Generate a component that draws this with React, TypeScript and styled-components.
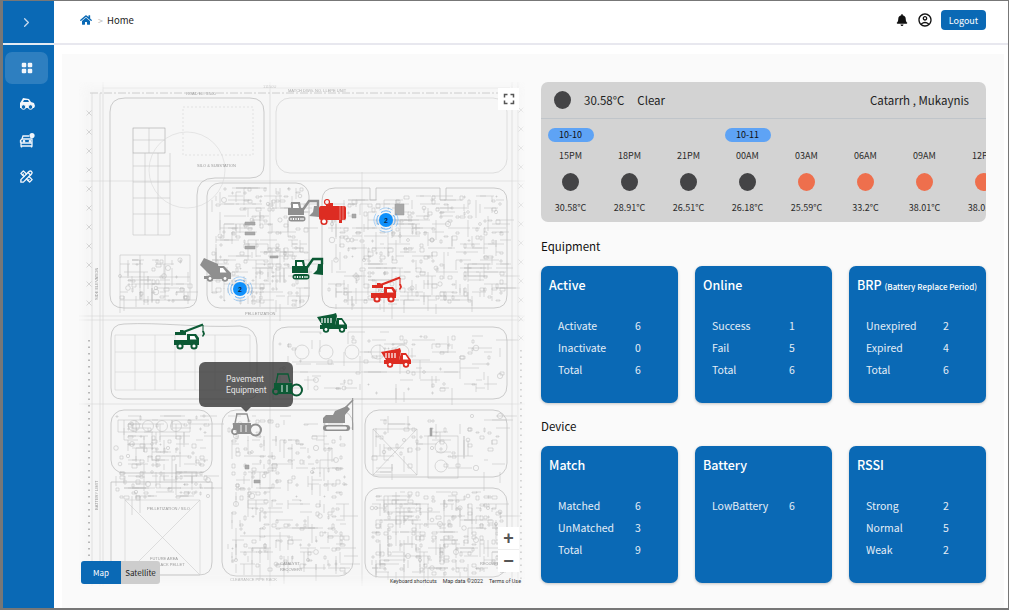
import { Fragment, useMemo } from "react";
import styled, { createGlobalStyle } from "styled-components";
import { ChevronRight } from "lucide-react";
import { BsGridFill } from "react-icons/bs";
import { FaBell, FaHome } from "react-icons/fa";
import { MdFullscreen, MdOutlineAccountCircle } from "react-icons/md";
import { TbTools } from "react-icons/tb";

const BLUE = "#0a69b5";
const RED = "#dd2c22";
const GREEN = "#0c5a35";
const GREY = "#8f8f8f";

const GlobalStyle = createGlobalStyle`
  html, body {
    margin: 0;
    padding: 0;
    background: #fff;
    font-family: "Noto Sans CJK KR", "Noto Sans", sans-serif;
  }
  * { box-sizing: border-box; }
`;

const Frame = styled.div`
  width: 1009px;
  height: 610px;
  display: flex;
  overflow: hidden;
  border-style: solid;
  border-color: #777;
  border-width: 1px 1px 2px 3px;
`;

const Sidebar = styled.aside`
  width: 51px;
  flex: none;
  background: ${BLUE};
  display: flex;
  flex-direction: column;
`;

const SidebarTop = styled.div`
  height: 44px;
  flex: none;
  display: flex;
  align-items: center;
  justify-content: center;
  padding-right: 5px;
  color: #c9dbee;
  border-bottom: 2px solid #e4ebf3;
`;

const Nav = styled.nav`
  display: flex;
  flex-direction: column;
  gap: 4px;
  padding: 7px 2px 0;
`;

const NavItem = styled.div<{ $active?: boolean }>`
  width: 43px;
  height: 32px;
  border-radius: 7px;
  display: flex;
  align-items: center;
  justify-content: center;
  color: #f2f6fb;
  background: ${(p) => (p.$active ? "rgba(255,255,255,0.15)" : "transparent")};
`;

const Main = styled.main`
  flex: 1;
  min-width: 0;
  display: flex;
  flex-direction: column;
`;

const Header = styled.header`
  height: 44px;
  flex: none;
  display: flex;
  align-items: center;
  padding: 0 22px 4px 26px;
  border-bottom: 2px solid #e8e8ef;
`;

const Crumbs = styled.div`
  display: flex;
  align-items: center;
  color: #222;
  font-size: 9.5px;
  flex: 1;
`;

const CrumbSep = styled.span`
  color: #b9b9b9;
  margin: 0 4px 0 6px;
  font-size: 9px;
`;

const HeaderIcon = styled.span`
  display: flex;
  align-items: center;
  justify-content: center;
  width: 16px;
  color: #111;
  margin-right: 7px;
`;

const LogoutButton = styled.button`
  width: 45px;
  height: 20px;
  margin-left: 1px;
  padding: 0;
  border: 0;
  border-radius: 4px;
  background: ${BLUE};
  color: #fff;
  font-family: inherit;
  font-size: 9px;
`;

const Content = styled.div`
  flex: 1;
  padding: 9px 4px 0 8px;
  display: flex;
  min-height: 0;
`;

const Panel = styled.div`
  flex: 1;
  background: #fafafa;
  padding: 28px 17px 0;
  display: flex;
  gap: 16px;
`;

const MapBox = styled.div`
  position: relative;
  width: 446px;
  height: 504px;
  flex: none;
  background: #f6f6f6;
  overflow: hidden;
  &::after {
    content: "";
    position: absolute;
    inset: 0;
    box-shadow: inset 0 0 10px 5px rgba(250, 250, 250, 0.9);
    pointer-events: none;
  }
`;

const BlueprintSvg = styled.svg`
  display: block;
  width: 446px;
  height: 504px;
  fill: none;
  stroke: #b8b8b8;
  stroke-width: 0.5;
  filter: blur(0.3px);
  text {
    fill: #9c9c9c;
    stroke: none;
    font-family: "Liberation Sans", sans-serif;
    font-size: 4px;
  }
`;

// map coordinates below are measured from the page, hence the minus on left/top
const Pin = styled.svg<{ $left: number; $top: number; $color: string; $z?: number }>`
  position: absolute;
  left: ${(p) => p.$left - 79}px;
  top: ${(p) => p.$top - 82}px;
  color: ${(p) => p.$color};
  z-index: ${(p) => p.$z ?? 2};
  overflow: visible;
`;

const Cluster = styled.div<{ $left: number; $top: number }>`
  position: absolute;
  left: ${(p) => p.$left - 79 - 13}px;
  top: ${(p) => p.$top - 82 - 13}px;
  width: 26px;
  height: 26px;
  display: flex;
  align-items: center;
  justify-content: center;
  color: #102a4a;
  font-size: 7px;
  font-weight: 700;
  font-family: "Liberation Sans", sans-serif;
  z-index: 2;
  svg {
    position: absolute;
    inset: 0;
  }
  span {
    position: relative;
  }
`;

const Tooltip = styled.div`
  position: absolute;
  left: 120px;
  top: 280px;
  width: 94px;
  height: 45px;
  border-radius: 6px;
  background: rgba(62, 62, 62, 0.84);
  color: #e6e6e6;
  font-family: Roboto, sans-serif;
  font-size: 8.5px;
  line-height: 11px;
  padding: 12px 0 0 27px;
  z-index: 1;
  &::after {
    content: "";
    position: absolute;
    left: 42px;
    bottom: -5px;
    border-style: solid;
    border-width: 5px 5px 0;
    border-color: rgba(62, 62, 62, 0.84) transparent transparent;
  }
`;

const FullscreenButton = styled.div`
  position: absolute;
  left: 419px;
  top: 6px;
  width: 21px;
  height: 22px;
  background: #fff;
  color: #555;
  display: flex;
  align-items: center;
  justify-content: center;
  z-index: 3;
`;

const ZoomBox = styled.div`
  position: absolute;
  left: 419px;
  top: 445px;
  width: 21px;
  height: 45px;
  background: #fff;
  z-index: 3;
  display: flex;
  flex-direction: column;
`;

const ZoomKey = styled.div`
  flex: 1;
  display: flex;
  align-items: center;
  justify-content: center;
  color: #555;
  font-size: 18px;
  font-weight: 700;
  line-height: 1;
  font-family: "Liberation Sans", sans-serif;
  & + & {
    border-top: 1px solid #eee;
  }
`;

const MapType = styled.div`
  position: absolute;
  left: 2px;
  top: 479px;
  display: flex;
  height: 23px;
  border-radius: 3px;
  overflow: hidden;
  z-index: 3;
`;

const MapTypeKey = styled.div<{ $on?: boolean }>`
  width: ${(p) => (p.$on ? 40 : 39)}px;
  display: flex;
  align-items: center;
  justify-content: center;
  font-size: 8px;
  background: ${(p) => (p.$on ? BLUE : "#cdcdcd")};
  color: ${(p) => (p.$on ? "#fff" : "#222")};
`;

const Attribution = styled.div`
  position: absolute;
  right: 4px;
  bottom: 1px;
  display: flex;
  gap: 6px;
  font-size: 5.4px;
  line-height: 7px;
  color: #333;
  font-family: Roboto, sans-serif;
  z-index: 3;
`;

const RightCol = styled.div`
  width: 445px;
  flex: none;
`;

const Weather = styled.section`
  height: 140px;
  border-radius: 7px;
  background: #d3d3d3;
  overflow: hidden;
`;

const WeatherHead = styled.div`
  height: 37px;
  display: flex;
  align-items: center;
  padding: 0 17px 0 13px;
  border-bottom: 1px solid #c0c5ca;
  color: #222;
  font-size: 11.5px;
`;

const Dot = styled.span<{ $warm?: boolean }>`
  display: block;
  width: 17px;
  height: 18px;
  border-radius: 50%;
  flex: none;
  background: ${(p) => (p.$warm ? "#ee6f4d" : "#444446")};
`;

const HeadTemp = styled.span`
  margin-left: 13px;
`;

const HeadSky = styled.span`
  margin-left: 13px;
  flex: 1;
`;

const Forecast = styled.div`
  display: flex;
`;

const Slot = styled.div`
  width: 59px;
  flex: none;
  display: flex;
  flex-direction: column;
  align-items: center;
  padding-top: 9px;
  color: #2a2a2a;
  font-size: 9px;
  white-space: nowrap;
`;

const DatePill = styled.div`
  width: 46px;
  height: 14px;
  border-radius: 7px;
  background: #5ea3f5;
  color: #111;
  font-size: 9px;
  line-height: 14px;
  text-align: center;
`;

const PillGap = styled.div`
  height: 14px;
`;

const SlotText = styled.div`
  height: 16px;
  line-height: 16px;
  margin-top: 6px;
`;

const SlotDot = styled(Dot)`
  margin: 9px 0 3px;
`;

const SectionTitle = styled.h3`
  margin: 14px 0 8px;
  height: 22px;
  line-height: 21px;
  font-size: 11.5px;
  font-weight: 400;
  color: #111;
  & ~ & {
    margin-top: 13px;
  }
`;

const CardRow = styled.div`
  display: grid;
  grid-template-columns: repeat(3, 137px);
  gap: 17px;
`;

const Card = styled.div`
  height: 137px;
  border-radius: 7px;
  background: ${BLUE};
  box-shadow: 0 1px 3px rgba(0, 0, 0, 0.22);
  color: #fff;
  padding: 9px 8px 0;
`;

const CardTitle = styled.h4`
  margin: 0;
  height: 20px;
  line-height: 20px;
  font-size: 12.5px;
  font-weight: 500;
  white-space: nowrap;
  small {
    font-size: 8px;
    font-weight: 500;
  }
`;

const Stats = styled.dl`
  margin: 20px 0 0 9px;
  display: grid;
  grid-template-columns: 77px 1fr;
  grid-auto-rows: 22px;
  line-height: 22px;
  font-size: 10.5px;
  color: #e4edf6;
  dt,
  dd {
    margin: 0;
  }
`;

type Vehicle = { left: number; top: number; color: string; z?: number };

const Wheel = ({ cx, cy, r = 3.2 }: { cx: number; cy: number; r?: number }) => (
  <>
    <circle cx={cx} cy={cy} r={r} fill="currentColor" />
    <circle cx={cx} cy={cy} r={r * 0.45} fill="#fff" />
  </>
);

const DumpTruck = ({ left, top, color }: Vehicle) => (
  <Pin $left={left} $top={top} $color={color} width="32" height="20" viewBox="0 0 32 20">
    <path d="M0 4 16 1l3-1 1 3-2 9H5z" fill="currentColor" />
    <path d="M5 5v5M8 5v5M11 5v5M14 5v5" stroke="#fff" strokeWidth="1.2" />
    <path d="M20 5h5l5 7v4H3v-4h15z" fill="currentColor" />
    <path d="M22 7h2.5l3 4.5H22z" fill="#fff" />
    <Wheel cx={9} cy={16.5} />
    <Wheel cx={25} cy={16.5} />
  </Pin>
);

const Crane = ({ left, top, color }: Vehicle) => (
  <Pin $left={left} $top={top} $color={color} width="31" height="27" viewBox="0 0 31 27">
    <path d="M7 10 29 1.5" stroke="currentColor" strokeWidth="2.2" />
    <path d="M29 2v6" stroke="currentColor" strokeWidth="1" />
    <path d="M28 8h2l1 3-2 3-1-1 1-2z" fill="currentColor" />
    <path d="M1 9h5V7h3l3 2v3H1z" fill="currentColor" />
    <path d="M13 11h9l3 4v7H0v-5h13z" fill="currentColor" />
    <path d="M16 13h4.500l2 3.500H16z" fill="#fff" />
    <Wheel cx={6} cy={23} r={3.6} />
    <Wheel cx={20} cy={23} r={3.6} />
  </Pin>
);

const Excavator = ({ left, top, color }: Vehicle) => (
  <Pin $left={left} $top={top} $color={color} width="34" height="22" viewBox="0 0 34 22">
    <path d="M0 8h3V2h9l1 6h3v7H0z" fill="currentColor" />
    <path d="M5 4h5l1 4H5z" fill="#fff" />
    <path d="M14 11 21 1h9v5" fill="none" stroke="currentColor" strokeWidth="2.4" />
    <path d="M26 6h5v11l-10-1 4-4z" fill="currentColor" />
    <rect x="0.500" y="16" width="17" height="5.500" rx="2.700" fill="currentColor" />
    <path d="M3 18v2M5.500 18v2M8 18v2M10.500 18v2M13 18v2M15 18v2" stroke="#fff" strokeWidth="1.200" />
  </Pin>
);

const Mixer = ({ left, top, color }: Vehicle) => (
  <Pin $left={left} $top={top} $color={color} width="32" height="24" viewBox="0 0 32 24">
    <path d="M0 7 4 0 18 6l1 7-5 5h-3z" fill="currentColor" />
    <path d="M18 8h6l7 7v6H4v-3h9z" fill="currentColor" />
    <path d="M20 10h3l3.500 4.500H20z" fill="#fff" />
    <Wheel cx={10} cy={20.500} />
    <Wheel cx={25} cy={20.500} />
  </Pin>
);

const Compressor = ({ left, top, color }: Vehicle) => (
  <Pin $left={left} $top={top} $color={color} $z={3} width="28" height="26" viewBox="0 0 28 26">
    <rect x="0" y="7" width="27" height="14" rx="2" fill="currentColor" />
    <rect x="7" y="4" width="7" height="4" fill="currentColor" />
    <path d="M21 7v14M24 7v14" stroke="#f1a49e" strokeWidth="0.700" />
    <circle cx="8" cy="3" r="2.500" fill="#f4f4f4" stroke="currentColor" strokeWidth="1.200" />
    <circle cx="5" cy="22.500" r="2.800" fill="#fff" stroke="currentColor" strokeWidth="1.600" />
    <path d="M20 21h3v3h-3z" fill="currentColor" />
  </Pin>
);

const Roller = ({ left, top, color, z }: Vehicle) => (
  <Pin $left={left} $top={top} $color={color} $z={z} width="31" height="24" viewBox="0 0 31 24">
    <path d="M5 1h11l2 8M6 1 4 10" fill="none" stroke="currentColor" strokeWidth="1.300" />
    <path d="M2 10h18v11H7v-4H2z" fill="currentColor" />
    <path d="M10 12v7M15 12v7" stroke="#fff" strokeWidth="1.100" opacity="0.800" />
    <circle cx="3.800" cy="18.500" r="2.800" fill="none" stroke="currentColor" strokeWidth="1.800" />
    <circle cx="24.500" cy="17" r="5.500" fill="none" stroke="currentColor" strokeWidth="2" />
  </Pin>
);

const CrawlerCrane = ({ left, top, color }: Vehicle) => (
  <Pin $left={left} $top={top} $color={color} width="33" height="33" viewBox="0 0 33 33">
    <path d="M29.700 0v32" stroke="currentColor" strokeWidth="1" />
    <path d="M22 10 30 2" stroke="currentColor" strokeWidth="1.600" />
    <path d="M0 25v-5l3-3h7l2-4 12-5 3 3-5 6v8z" fill="currentColor" />
    <rect x="0" y="27" width="27" height="6" rx="3" fill="currentColor" />
    <rect x="3" y="28.500" width="21" height="3" rx="1.500" fill="#f2f2f2" />
  </Pin>
);

const ClusterMark = ({ left, top }: { left: number; top: number }) => (
  <Cluster $left={left} $top={top}>
    <svg width="26" height="26" viewBox="0 0 26 26" fill="none" stroke="#2f95f5">
      <circle cx="13" cy="13" r="7" fill="#0f90fb" stroke="none" />
      <g strokeWidth="1" opacity="0.750">
        <path d="M8 5.500a9 9 0 0 1 10 0M5.500 8a9 9 0 0 0 0 10M20.500 8a9 9 0 0 1 0 10M8 20.500a9 9 0 0 0 10 0" />
        <path d="M6.500 3a12 12 0 0 1 13 0M3 6.500a12 12 0 0 0 0 13M23 6.500a12 12 0 0 1 0 13M6.500 23a12 12 0 0 0 13 0" opacity="0.500" />
      </g>
    </svg>
    <span>2</span>
  </Cluster>
);

// zones of plant detail, in page coordinates: x, y, w, h, how many marks
const DETAIL_ZONES: [number, number, number, number, number][] = [
  [212, 186, 92, 118, 300],
  [328, 195, 174, 108, 460],
  [278, 332, 224, 60, 130],
  [228, 416, 118, 155, 360],
  [116, 414, 92, 52, 130],
  [116, 470, 92, 28, 90],
  [370, 492, 132, 80, 360],
  [372, 414, 130, 60, 90],
  [118, 258, 72, 44, 90],
];

const buildDetail = () => {
  let seed = 48271;
  const rnd = (n: number) => {
    seed = (seed * 16807) % 2147483647;
    return (seed / 2147483647) * n;
  };
  let d = "";
  for (const [x, y, w, h, count] of DETAIL_ZONES) {
    for (let i = 0; i < count; i++) {
      const px = Math.round((x + rnd(w)) / 4) * 4;
      const py = Math.round((y + rnd(h)) / 4) * 4;
      const kind = rnd(10);
      if (kind < 4) {
        const bw = 1 + Math.round(rnd(4));
        d += `M${px} ${py}h${bw}v${1 + Math.round(rnd(3))}h-${bw}z`;
      } else if (kind < 4.600) {
        const r = 1 + rnd(1.800);
        d += `M${px - r} ${py}a${r} ${r} 0 1 0 ${2 * r} 0a${r} ${r} 0 1 0 ${-2 * r} 0`;
      } else if (kind < 7.500) {
        d += `M${px} ${py}h${4 + Math.round(rnd(20))}`;
      } else {
        d += `M${px} ${py}v${4 + Math.round(rnd(16))}`;
      }
    }
  }
  return d;
};

const crossMarks = (x: number, from: number, to: number, step: number) => {
  let d = "";
  for (let y = from; y <= to; y += step) d += `M${x - 2.500} ${y - 2.500}l5 5m0-5l-5 5`;
  return d;
};

const Blueprint = () => {
  const detail = useMemo(buildDetail, []);
  return (
    <BlueprintSvg viewBox="79 82 446 504">
      {/* roads and site limits */}
      <path d="M90 93H510" strokeDasharray="8 2 2 2" stroke="#999" />
      <path d="M92 93V586M100 93V586M103 82V586M270 82V586M362 172V586M512 82V586M518 82V586" stroke="#c9c9c9" />
      <path d="M79 316H525M79 320H525M79 404H525M79 181H525M103 88H510" stroke="#cfcfcf" />
      <path d={crossMarks(89, 113, 320, 19)} stroke="#aaa" />
      <path d={crossMarks(521, 110, 350, 19)} stroke="#aaa" />
      <path d="M89 340V580M521 350V580" strokeDasharray="1.500 5" stroke="#999" strokeWidth="1.500" />
      {/* plant blocks */}
      <path d="M125 98H250Q264 98 264 112V165Q264 178 250 178H215Q197 178 197 195V295Q197 308 184 308H124Q110 308 110 295V112Q110 98 125 98Z" strokeWidth="0.700" />
      <rect x="276" y="98" width="231" height="75" rx="14" stroke="#c4c4c4" />
      <rect x="207" y="183" width="102" height="125" rx="13" strokeWidth="0.700" />
      <path d="M322 201Q322 188 335 188H370V200H376V188H440V200H446V188H494Q507 188 507 201V295Q507 308 494 308H335Q322 308 322 295Z" strokeWidth="0.700" />
      <path d="M124 324C160 322 200 328 240 326Q257 328 257 345V390Q257 399 248 399H122Q111 399 111 388V338Q111 324 124 324Z" strokeWidth="0.700" />
      <path d="M273 400V342Q273 327 288 327H493Q507 327 507 341V385Q507 399 493 399H273" strokeWidth="0.700" />
      <rect x="111" y="410" width="101" height="63" rx="13" strokeWidth="0.700" />
      <path d="M111 482H212V562Q212 575 199 575H111Z" strokeWidth="0.700" />
      <rect x="222" y="410" width="131" height="166" rx="14" strokeWidth="0.700" />
      <rect x="365" y="410" width="142" height="67" rx="14" strokeWidth="0.700" />
      <rect x="365" y="488" width="142" height="89" rx="14" strokeWidth="0.700" />
      {/* fixed equipment */}
      <rect x="133" y="128" width="32" height="25" stroke="#999" />
      <path d="M149 128V153M133 140H165M133 153V235H170V153M133 166H170M133 182H170M133 198H170M133 214H170M145 153V235M158 153V235" />
      <circle cx="187" cy="170" r="38" stroke="#d2d2d2" />
      <rect x="183" y="107" width="70" height="48" strokeDasharray="2 2" stroke="#ccc" />
      <path d="M125 500H200V575H125ZM125 500 200 575M200 500 125 575" stroke="#c4c4c4" />
      <path d="M118 420H190V432H118Z" />
      <circle cx="134" cy="426" r="5.500" /><circle cx="148" cy="426" r="5.500" /><circle cx="162" cy="426" r="5.500" /><circle cx="176" cy="426" r="5.500" />
      <path d="M373 429H417V475H373ZM373 429 417 475M417 429 373 475" />
      <rect x="428" y="436" width="30" height="42" />
      <circle cx="441" cy="447" r="6" /><circle cx="441" cy="466" r="6" />
      <circle cx="302" cy="352" r="7" /><circle cx="326" cy="352" r="7" /><circle cx="352" cy="352" r="7" /><circle cx="378" cy="352" r="7" /><circle cx="402" cy="352" r="7" />
      <path d="M292 362H460M292 372H460" />
      <path d="M115 335H250V390H115ZM135 335V390M155 335V390M175 335V390M195 335V390M215 335V390M115 352H250M115 372H250" stroke="#cacaca" />
      <path d="M120 255H190V300H120ZM140 255V300M165 255V300M120 277H190" />
      <path d={detail} />
      <path d="M395 204h9v11h-9zM352 214h4v4h-4zM245 222h10v3h-10zM245 232h10v3h-10zM245 246h10v3h-10zM270 256h8v2h-8zM430 428h2v8h-2zM254 480h6v3h-6zM245 465h4v4h-4z" fill="#a8a8a8" stroke="#9a9a9a" />
      {/* labels */}
      <text x="263" y="88">11150U</text>
      <text x="186" y="95">ROAD EL. 3.500</text>
      <text x="288" y="92">MATCH DWG. NO. LLEPE UNIT</text>
      <text x="197" y="167">SILO &amp; SUBSTATION</text>
      <text x="147" y="510">PELLETIZATION / SILO</text>
      <text x="150" y="560">FUTURE AREA</text>
      <text x="146" y="566">FOR BLACK PELLET</text>
      <text x="245" y="315">PELLETIZATION</text>
      <text x="378" y="292">POLYMER</text>
      <text x="280" y="565">CATALYST</text>
      <text x="280" y="571">RECOVERY</text>
      <text x="480" y="565">RECOVERY</text>
      <text x="230" y="581">CLEARANCE PIPE RACK</text>
      <text x="0" y="0" transform="translate(98 300) rotate(-90)">SIDE ELEVATION</text>
      <text x="0" y="0" transform="translate(98 510) rotate(-90)">BATTERY LIMIT</text>
    </BlueprintSvg>
  );
};

const MapPanel = () => (
  <MapBox>
    <Blueprint />
    <Excavator left={288} top={200} color={GREY} />
    <Compressor left={319} top={199} color={RED} />
    <ClusterMark left={386} top={220} />
    <Mixer left={200} top={258} color={GREY} />
    <ClusterMark left={240} top={289} />
    <Excavator left={292} top={258} color={GREEN} />
    <Crane left={371} top={276} color={RED} />
    <DumpTruck left={317} top={313} color={GREEN} />
    <Crane left={174} top={323} color={GREEN} />
    <DumpTruck left={381} top={348} color={RED} />
    <Tooltip>
      Pavement
      <br />
      Equipment
    </Tooltip>
    <Roller left={272} top={373} color={GREEN} z={3} />
    <Roller left={231} top={413} color={GREY} />
    <CrawlerCrane left={323} top={398} color={GREY} />
    <FullscreenButton>
      <MdFullscreen size={18} />
    </FullscreenButton>
    <ZoomBox>
      <ZoomKey>+</ZoomKey>
      <ZoomKey>−</ZoomKey>
    </ZoomBox>
    <MapType>
      <MapTypeKey $on>Map</MapTypeKey>
      <MapTypeKey>Satellite</MapTypeKey>
    </MapType>
    <Attribution>
      <span>Keyboard shortcuts</span>
      <span>Map data ©2022</span>
      <span>Terms of Use</span>
    </Attribution>
  </MapBox>
);

const forecast = [
  { date: "10-10", hour: "15PM", temp: "30.58°C" },
  { hour: "18PM", temp: "28.91°C" },
  { hour: "21PM", temp: "26.51°C" },
  { date: "10-11", hour: "00AM", temp: "26.18°C" },
  { hour: "03AM", temp: "25.59°C", warm: true },
  { hour: "06AM", temp: "33.2°C", warm: true },
  { hour: "09AM", temp: "38.01°C", warm: true },
  { hour: "12PM", temp: "38.01°C", warm: true },
];

type Stat = [string, number];
type CardData = { title: string; note?: string; stats: Stat[] };

const equipment: CardData[] = [
  { title: "Active", stats: [["Activate", 6], ["Inactivate", 0], ["Total", 6]] },
  { title: "Online", stats: [["Success", 1], ["Fail", 5], ["Total", 6]] },
  {
    title: "BRP",
    note: "(Battery Replace Period)",
    stats: [["Unexpired", 2], ["Expired", 4], ["Total", 6]],
  },
];

const device: CardData[] = [
  { title: "Match", stats: [["Matched", 6], ["UnMatched", 3], ["Total", 9]] },
  { title: "Battery", stats: [["LowBattery", 6]] },
  { title: "RSSI", stats: [["Strong", 2], ["Normal", 5], ["Weak", 2]] },
];

const StatCards = ({ cards }: { cards: CardData[] }) => (
  <CardRow>
    {cards.map((card) => (
      <Card key={card.title}>
        <CardTitle>
          {card.title} {card.note ? <small>{card.note}</small> : null}
        </CardTitle>
        <Stats>
          {card.stats.map(([label, value]) => (
            <Fragment key={label}>
              <dt>{label}</dt>
              <dd>{value}</dd>
            </Fragment>
          ))}
        </Stats>
      </Card>
    ))}
  </CardRow>
);

const VehicleNavIcon = () => (
  <svg width="16" height="14" viewBox="0 0 16 14" fill="currentColor">
    <path d="M1 6 3 3l1-2 6 1 2 3 3 1 1 3-1 2H1z" />
    <path d="M5 3h4l1 2H4z" fill={BLUE} />
    <circle cx="4.500" cy="10" r="2.300" fill={BLUE} stroke="currentColor" />
    <circle cx="11.500" cy="10" r="2.300" fill={BLUE} stroke="currentColor" />
  </svg>
);

const CarRepairNavIcon = () => (
  <svg width="16" height="16" viewBox="0 0 16 16" fill="none" stroke="currentColor" strokeWidth="1.300">
    <path d="M3 7 4 4h6M1.500 10V8.500L3 7h10v7H2v-4zM1.500 11h12M2.500 14v1.500M12.500 14v1.500" />
    <circle cx="5" cy="9.300" r="0.700" fill="currentColor" />
    <circle cx="11" cy="9.300" r="0.700" fill="currentColor" />
    <circle cx="13" cy="3.500" r="2.600" fill="currentColor" stroke="none" />
  </svg>
);

export default function App() {
  return (
    <>
      <GlobalStyle />
      <Frame>
        <Sidebar>
          <SidebarTop>
            <ChevronRight size={15} strokeWidth={2} />
          </SidebarTop>
          <Nav>
            <NavItem $active>
              <BsGridFill size={12} />
            </NavItem>
            <NavItem>
              <VehicleNavIcon />
            </NavItem>
            <NavItem>
              <CarRepairNavIcon />
            </NavItem>
            <NavItem>
              <TbTools size={15} strokeWidth={2.200} />
            </NavItem>
          </Nav>
        </Sidebar>
        <Main>
          <Header>
            <Crumbs>
              <FaHome size={12} color={BLUE} />
              <CrumbSep>&gt;</CrumbSep>
              Home
            </Crumbs>
            <HeaderIcon>
              <FaBell size={12} />
            </HeaderIcon>
            <HeaderIcon>
              <MdOutlineAccountCircle size={20} />
            </HeaderIcon>
            <LogoutButton>Logout</LogoutButton>
          </Header>
          <Content>
            <Panel>
              <MapPanel />
              <RightCol>
                <Weather>
                  <WeatherHead>
                    <Dot />
                    <HeadTemp>30.58°C</HeadTemp>
                    <HeadSky>Clear</HeadSky>
                    <span>Catarrh , Mukaynis</span>
                  </WeatherHead>
                  <Forecast>
                    {forecast.map((slot) => (
                      <Slot key={slot.hour}>
                        {slot.date ? <DatePill>{slot.date}</DatePill> : <PillGap />}
                        <SlotText>{slot.hour}</SlotText>
                        <SlotDot $warm={slot.warm} />
                        <SlotText>{slot.temp}</SlotText>
                      </Slot>
                    ))}
                  </Forecast>
                </Weather>
                <SectionTitle>Equipment</SectionTitle>
                <StatCards cards={equipment} />
                <SectionTitle>Device</SectionTitle>
                <StatCards cards={device} />
              </RightCol>
            </Panel>
          </Content>
        </Main>
      </Frame>
    </>
  );
}
